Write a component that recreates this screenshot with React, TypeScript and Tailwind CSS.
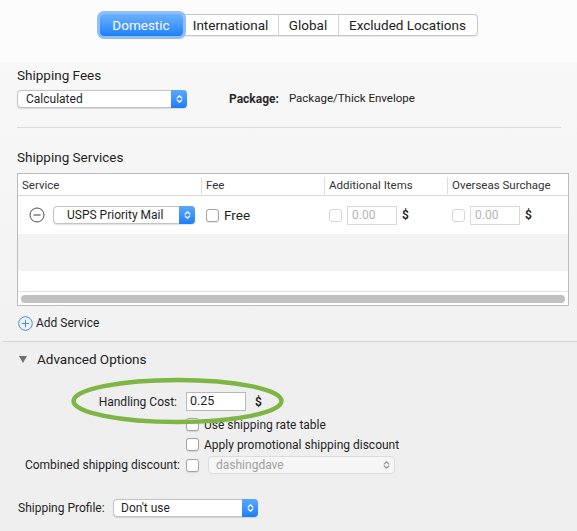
const Stepper = ({ disabled = false }: { disabled?: boolean }) => (
  <svg width="7" height="10" viewBox="0 0 7 10" fill="none">
    <path
      d="M1.2 4L3.5 1.8L5.8 4M1.2 6L3.5 8.2L5.8 6"
      stroke={disabled ? '#9a9a9a' : '#ffffff'}
      strokeWidth="1.2"
      strokeLinecap="round"
      strokeLinejoin="round"
    />
  </svg>
);

interface PopupProps {
  label: string;
  width: string;
  textPad?: string;
}

const Popup = ({ label, width, textPad = 'pl-[7px]' }: PopupProps) => (
  <div
    className={`flex h-[18px] ${width} items-stretch rounded-[4px] border border-[#c4c4c4] bg-white shadow-[0_0.5px_1px_rgba(0,0,0,0.12)]`}
  >
    <div className={`flex flex-1 items-center ${textPad} text-[12px] text-[#1f1f1f]`}>{label}</div>
    <div className="-my-px -mr-px flex w-[16px] items-center justify-center rounded-r-[4px] bg-gradient-to-b from-[#5aa8fb] to-[#1a7ff6]">
      <Stepper />
    </div>
  </div>
);

const Checkbox = ({ disabled = false }: { disabled?: boolean }) => (
  <div
    className={`h-[13px] w-[13px] shrink-0 rounded-[3px] border bg-white ${
      disabled ? 'border-[#d6d6d6]' : 'border-[#a3a3a3] shadow-[0_0.5px_1px_rgba(0,0,0,0.1)]'
    }`}
  />
);

const AmountField = () => (
  <div className="flex items-center">
    <Checkbox disabled />
    <div className="ml-[5px] flex h-[19px] w-[50px] items-center border border-[#d9d9d9] bg-white pl-[4px] text-[12px] text-[#b4b4b4]">
      0.00
    </div>
    <span className="ml-[5px] text-[12px] font-semibold text-[#222]">$</span>
  </div>
);

const tabs = ['Domestic', 'International', 'Global', 'Excluded Locations'];
const tabWidths = ['w-[83px]', 'w-[95px]', 'w-[60px]', 'w-[139px]'];

export default function App() {
  return (
    <div className="relative h-[531px] w-[577px] overflow-hidden bg-[#efefef] font-['Roboto','Liberation_Sans',sans-serif] text-[#1f1f1f]">
      {/* tab bar */}
      <div className="flex h-[62px] justify-center bg-[#fcfcfc]">
        <div className="mt-[14px] flex h-[22px] rounded-[4px] border border-[#c6c6c6] bg-white shadow-[0_0.5px_1px_rgba(0,0,0,0.08)]">
          {tabs.map((t, i) => (
            <div
              key={t}
              className={`flex items-center justify-center text-[13.5px] ${tabWidths[i]} ${
                i === 0
                  ? 'relative z-10 -my-px -ml-px rounded-[4px] bg-gradient-to-b from-[#6ab2fc] to-[#1b80fa] text-white ring-[3px] ring-[#90bff6]'
                  : 'border-l border-[#d6d6d6] text-[#222]'
              }`}
            >
              {t}
            </div>
          ))}
        </div>
      </div>

      {/* shipping fees + services */}
      <div className="flex h-[279px] flex-col bg-gradient-to-b from-[#f8f8f8] to-[#f2f2f2] px-[17px]">
        <div className="flex h-[23px] items-end text-[13.5px]">Shipping Fees</div>
        <div className="mt-[5px] flex items-center">
          <Popup label="Calculated" width="w-[170px]" textPad="pl-[8px]" />
          <span className="ml-[42px] text-[12px] font-bold text-[#2a2a2a]">Package:</span>
          <span className="ml-[10px] text-[11.5px] text-[#222]">Package/Thick Envelope</span>
        </div>
        <div className="mt-[19px] h-px w-[544px] bg-[#dadada]" />
        <div className="mt-[18px] flex h-[23px] items-center text-[13.5px]">Shipping Services</div>

        <div className="mt-[4px] flex h-[133px] w-[552px] flex-col border border-[#bcbcbc] bg-white">
          <div className="grid h-[22px] grid-cols-[183px_123px_123px_1fr] border-b border-[#d8d8d8] text-[11.5px] text-[#333]">
            <div className="flex items-center pl-[4px]">Service</div>
            <div className="my-[3px] flex items-center border-l border-[#dcdcdc] pl-[4px]">Fee</div>
            <div className="my-[3px] flex items-center border-l border-[#dcdcdc] pl-[4px]">Additional Items</div>
            <div className="my-[3px] flex items-center border-l border-[#dcdcdc] pl-[4px]">Overseas Surchage</div>
          </div>
          <div className="grid h-[38px] grid-cols-[183px_123px_123px_1fr] items-center">
            <div className="flex items-center pl-[11px]">
              <svg width="16" height="16" viewBox="0 0 16 16" fill="none">
                <circle cx="8" cy="8" r="7" stroke="#4d4d4d" strokeWidth="1" />
                <path d="M4.5 8H11.5" stroke="#4d4d4d" strokeWidth="1.1" />
              </svg>
              <div className="ml-[8px]">
                <Popup label="USPS Priority Mail" width="w-[142px]" textPad="pl-[13px]" />
              </div>
            </div>
            <div className="flex items-center pl-[5px]">
              <Checkbox />
              <span className="ml-[5px] text-[13.5px]">Free</span>
            </div>
            <div className="pl-[5px]">
              <AmountField />
            </div>
            <div className="pl-[5px]">
              <AmountField />
            </div>
          </div>
          <div className="h-[37px] bg-[#f3f3f3]" />
          <div className="h-[21px] border-b border-[#e4e4e4]" />
          <div className="flex flex-1 items-center px-[3px]">
            <div className="h-[8px] w-full rounded-full bg-[#c1c1c1]" />
          </div>
        </div>

        <div className="mt-[8px] flex h-[18px] items-center pl-px">
          <svg width="15" height="15" viewBox="0 0 15 15" fill="none">
            <circle cx="7.5" cy="7.5" r="6.8" stroke="#3e8ef2" strokeWidth="1" />
            <path d="M7.5 3.8V11.2M3.8 7.5H11.2" stroke="#3e8ef2" strokeWidth="1" />
          </svg>
          <span className="ml-[3px] text-[12px]">Add Service</span>
        </div>
      </div>

      <div className="ml-[3px] h-px bg-[#d4d4d4]" />

      {/* advanced options */}
      <div className="flex flex-col">
        <div className="mt-[7px] flex h-[20px] items-center pl-[19px]">
          <svg width="8" height="7" viewBox="0 0 8 7">
            <path d="M0 0H8L4 7Z" fill="#6f6f6f" />
          </svg>
          <span className="ml-[10px] text-[13.5px] text-[#222]">Advanced Options</span>
        </div>

        <div className="mt-[23px] flex h-[19px] items-center">
          <div className="w-[180px] pr-[3px] text-right text-[12px]">Handling Cost:</div>
          <div className="ml-[6px] flex h-[19px] w-[60px] items-center border border-[#b8b8b8] bg-white pl-[3px] text-[12.5px]">
            0.25
          </div>
          <span className="ml-[9px] text-[12px] font-semibold">$</span>
        </div>

        <div className="mt-[7px] flex h-[13px] items-center pl-[186px]">
          <Checkbox />
          <span className="ml-[5px] text-[12px]">Use shipping rate table</span>
        </div>
        <div className="mt-[7px] flex h-[13px] items-center pl-[186px]">
          <Checkbox />
          <span className="ml-[5px] text-[12px]">Apply promotional shipping discount</span>
        </div>
        <div className="mt-[5px] flex h-[18px] items-center">
          <div className="w-[180px] text-right text-[12px]">Combined shipping discount:</div>
          <div className="ml-[6px]">
            <Checkbox />
          </div>
          <div className="ml-[9px] flex h-[18px] w-[187px] items-center justify-between rounded-[4px] border border-[#dcdcdc] bg-[#f6f6f6] pl-[7px] pr-[4px] text-[12px] text-[#a0a0a0]">
            dashingdave
            <Stepper disabled />
          </div>
        </div>

        <div className="mt-[25px] flex items-center pl-[18px]">
          <span className="w-[95px] text-[12px]">Shipping Profile:</span>
          <Popup label="Don't use" width="w-[145px]" />
        </div>
      </div>

      {/* highlight drawn over the handling cost */}
      <svg className="pointer-events-none absolute left-[70px] top-[377px]" width="216" height="50" viewBox="0 0 216 50" fill="none">
        <ellipse cx="107.5" cy="24" rx="104" ry="21" stroke="#7fb545" strokeWidth="4.5" />
      </svg>
    </div>
  );
}
